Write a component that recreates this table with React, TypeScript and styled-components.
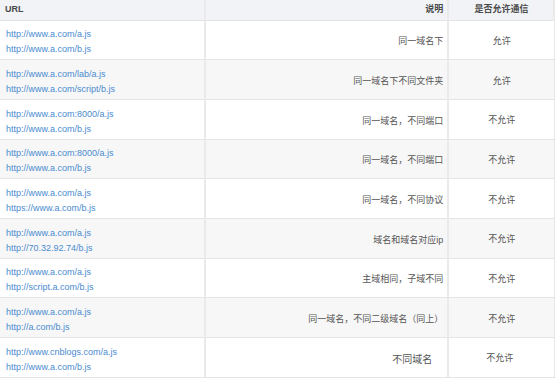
import styled, { createGlobalStyle } from "styled-components";

const GlobalStyle = createGlobalStyle`
  body {
    margin: 0;
    background: #fff;
    font-family: "Liberation Sans", Arial, "Noto Sans CJK SC", sans-serif;
  }
`;

const Table = styled.table`
  width: 555px;
  border-collapse: collapse;
  font-size: 9px;
  color: #555;
  border-right: 1px solid #e6e6e6;
`;

const HeadCell = styled.th<{ $align: string; $width: number }>`
  width: ${(p) => p.$width}px;
  height: 20px;
  padding: 4px 4px 0 5px;
  box-sizing: border-box;
  background: #f1f3f6;
  border-right: 2px solid #eaeaea;
  border-bottom: 1px solid #e3e3e3;
  text-align: ${(p) => p.$align};
  font-weight: bold;
  color: #4a4a4a;
  vertical-align: top;
  line-height: 11px;
`;

const Row = styled.tr<{ $alt: boolean }>`
  background: ${(p) => (p.$alt ? "#f7f7f7" : "#fff")};
  height: 39.7px;
  border-bottom: 1px solid #e4e4e4;
`;

const UrlCell = styled.td`
  padding: 5px 5px 0 6px;
  line-height: 15px;
  border-right: 2px solid #eaeaea;
  vertical-align: middle;
`;

const Link = styled.div`
  color: #4a8bd0;
`;

const DescCell = styled.td<{ $big?: boolean }>`
  text-align: right;
  padding: 2px ${(p) => (p.$big ? 15 : 4)}px 0 5px;
  font-size: ${(p) => (p.$big ? 10 : 9)}px;
  border-right: 2px solid #eaeaea;
  vertical-align: middle;
`;

const AllowCell = styled.td<{ $shift?: boolean }>`
  text-align: center;
  padding-top: 2px;
  padding-right: ${(p) => (p.$shift ? 4 : 0)}px;
  vertical-align: middle;
`;

const rows = [
  ["http://www.a.com/a.js", "http://www.a.com/b.js", "同一域名下", "允许"],
  ["http://www.a.com/lab/a.js", "http://www.a.com/script/b.js", "同一域名下不同文件夹", "允许"],
  ["http://www.a.com:8000/a.js", "http://www.a.com/b.js", "同一域名，不同端口", "不允许"],
  ["http://www.a.com:8000/a.js", "http://www.a.com/b.js", "同一域名，不同端口", "不允许"],
  ["http://www.a.com/a.js", "https://www.a.com/b.js", "同一域名，不同协议", "不允许"],
  ["http://www.a.com/a.js", "http://70.32.92.74/b.js", "域名和域名对应ip", "不允许"],
  ["http://www.a.com/a.js", "http://script.a.com/b.js", "主域相同，子域不同", "不允许"],
  ["http://www.a.com/a.js", "http://a.com/b.js", "同一域名，不同二级域名（同上）", "不允许"],
  ["http://www.cnblogs.com/a.js", "http://www.a.com/b.js", "不同域名", "不允许"],
];

export default function App() {
  return (
    <>
      <GlobalStyle />
      <Table>
        <thead>
          <tr>
            <HeadCell $align="left" $width={205}>URL</HeadCell>
            <HeadCell $align="right" $width={244}>说明</HeadCell>
            <HeadCell $align="center" $width={106}>是否允许通信</HeadCell>
          </tr>
        </thead>
        <tbody>
          {rows.map((r, i) => {
            const last = i === rows.length - 1;
            return (
              <Row key={i} $alt={i % 2 === 1}>
                <UrlCell>
                  <Link>{r[0]}</Link>
                  <Link>{r[1]}</Link>
                </UrlCell>
                <DescCell $big={last}>{r[2]}</DescCell>
                <AllowCell $shift={last}>{r[3]}</AllowCell>
              </Row>
            );
          })}
        </tbody>
      </Table>
    </>
  );
}
